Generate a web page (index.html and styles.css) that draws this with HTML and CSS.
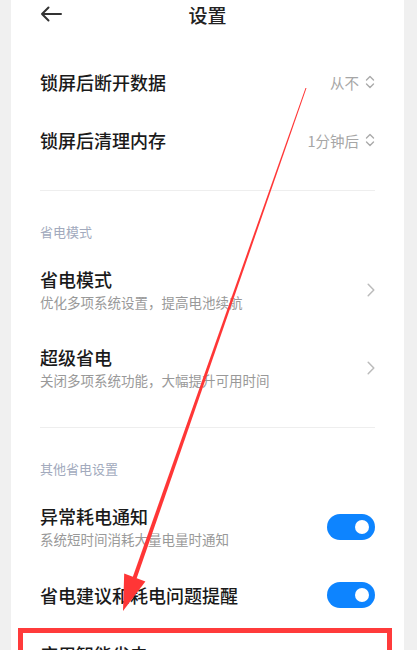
FILE: index.html
```html
<!DOCTYPE html>
<html lang="zh-CN">
<head>
<meta charset="utf-8">
<title>设置</title>
<link rel="stylesheet" href="styles.css">
</head>
<body>
<div class="screen">
  <header class="topbar">
    <svg class="back" width="22" height="16" viewBox="0 0 22 16"><path d="M21 8H2M8.5 1.5L2 8l6.5 6.5" fill="none" stroke="#333" stroke-width="2" stroke-linecap="round" stroke-linejoin="round"/></svg>
    <h1 class="title">设置</h1>
  </header>
  <main class="list">
    <div class="row single first">
      <span class="label">锁屏后断开数据</span>
      <span class="value">从不<svg class="updown" width="10" height="16" viewBox="0 0 10 16"><path d="M1.5 6L5 2.5 8.5 6M1.5 10L5 13.5 8.5 10" fill="none" stroke="#aaa" stroke-width="1.4" stroke-linecap="round" stroke-linejoin="round"/></svg></span>
    </div>
    <div class="row single">
      <span class="label">锁屏后清理内存</span>
      <span class="value">1分钟后<svg class="updown" width="10" height="16" viewBox="0 0 10 16"><path d="M1.5 6L5 2.5 8.5 6M1.5 10L5 13.5 8.5 10" fill="none" stroke="#aaa" stroke-width="1.4" stroke-linecap="round" stroke-linejoin="round"/></svg></span>
    </div>
    <div class="divider"></div>
    <div class="section">省电模式</div>
    <div class="row double">
      <div class="texts">
        <div class="label">省电模式</div>
        <div class="sub">优化多项系统设置，提高电池续航</div>
      </div>
      <svg class="chev" width="8" height="14" viewBox="0 0 8 14"><path d="M1.2 1.2L6.8 7 1.2 12.8" fill="none" stroke="#bbb" stroke-width="1.5" stroke-linecap="round" stroke-linejoin="round"/></svg>
    </div>
    <div class="row double">
      <div class="texts">
        <div class="label">超级省电</div>
        <div class="sub">关闭多项系统功能，大幅提升可用时间</div>
      </div>
      <svg class="chev" width="8" height="14" viewBox="0 0 8 14"><path d="M1.2 1.2L6.8 7 1.2 12.8" fill="none" stroke="#bbb" stroke-width="1.5" stroke-linecap="round" stroke-linejoin="round"/></svg>
    </div>
    <div class="divider second"></div>
    <div class="section">其他省电设置</div>
    <div class="row double">
      <div class="texts">
        <div class="label">异常耗电通知</div>
        <div class="sub">系统短时间消耗大量电量时通知</div>
      </div>
      <span class="toggle"><span class="knob"></span></span>
    </div>
    <div class="row double">
      <div class="texts">
        <div class="label">省电建议和耗电问题提醒</div>
      </div>
      <span class="toggle"><span class="knob"></span></span>
    </div>
    <div class="highlight">
      <div class="label">应用智能省电</div>
    </div>
  </main>
  <svg class="annot" width="393" height="650" viewBox="11 0 393 650">
    <polygon points="305.5,88 306.5,88 136.6,578.6 132.6,577.4" fill="#ff3636"/>
    <polygon points="123,611 124.2,573.6 145.4,581.4" fill="#ff3636"/>
  </svg>
</div>
</body>
</html>
```
FILE: styles.css
```css
* { box-sizing: border-box; }
html, body { margin: 0; padding: 0; }
body {
  background: #f0f0f0;
  font-family: "Noto Sans CJK SC", "Noto Sans", sans-serif;
  height: 650px;
  overflow: hidden;
}
.screen {
  position: relative;
  width: 393px;
  height: 650px;
  margin-left: 11px;
  background: #fff;
  overflow: hidden;
}
.topbar {
  height: 30px;
  display: flex;
  align-items: center;
  justify-content: center;
  position: relative;
}
.back {
  position: absolute;
  left: 29px;
  top: 6px;
}
.title {
  margin: 0;
  font-size: 19px;
  font-weight: 500;
  color: #222;
  line-height: 30px;
}
.list {
  padding: 0 29px;
}
.row {
  display: flex;
  align-items: center;
  justify-content: space-between;
}
.row.single {
  height: 58px;
}
.row.first {
  margin-top: 23px;
}
.row.double {
  padding: 16px 0;
}
.label {
  font-size: 18px;
  font-weight: 500;
  color: #1a1a1a;
  line-height: 24px;
}
.sub {
  font-size: 13.5px;
  color: #999;
  line-height: 22px;
}
.value {
  display: flex;
  align-items: center;
  gap: 6px;
  font-size: 14.5px;
  color: #a6a6a6;
}
.divider {
  height: 1px;
  background: #eeeeee;
  margin-top: 21px;
}
.divider.second {
  margin-top: 20px;
}
.section {
  margin-top: 31px;
  margin-bottom: 9px;
  font-size: 13px;
  line-height: 20px;
  color: #a2aabd;
}
.chev {
  margin-right: 0;
}
.toggle {
  width: 48px;
  height: 26px;
  border-radius: 13px;
  background: #0d84ff;
  display: flex;
  align-items: center;
  justify-content: flex-end;
  padding-right: 6px;
}
.knob {
  width: 14px;
  height: 14px;
  border-radius: 50%;
  background: #fff;
}
.highlight {
  margin: 4px -17px 0 -22px;
  border: 5px solid #ff3b3b;
  padding: 9px 12px 20px 17px;
}
.annot {
  position: absolute;
  left: 0;
  top: 0;
  pointer-events: none;
}
```
